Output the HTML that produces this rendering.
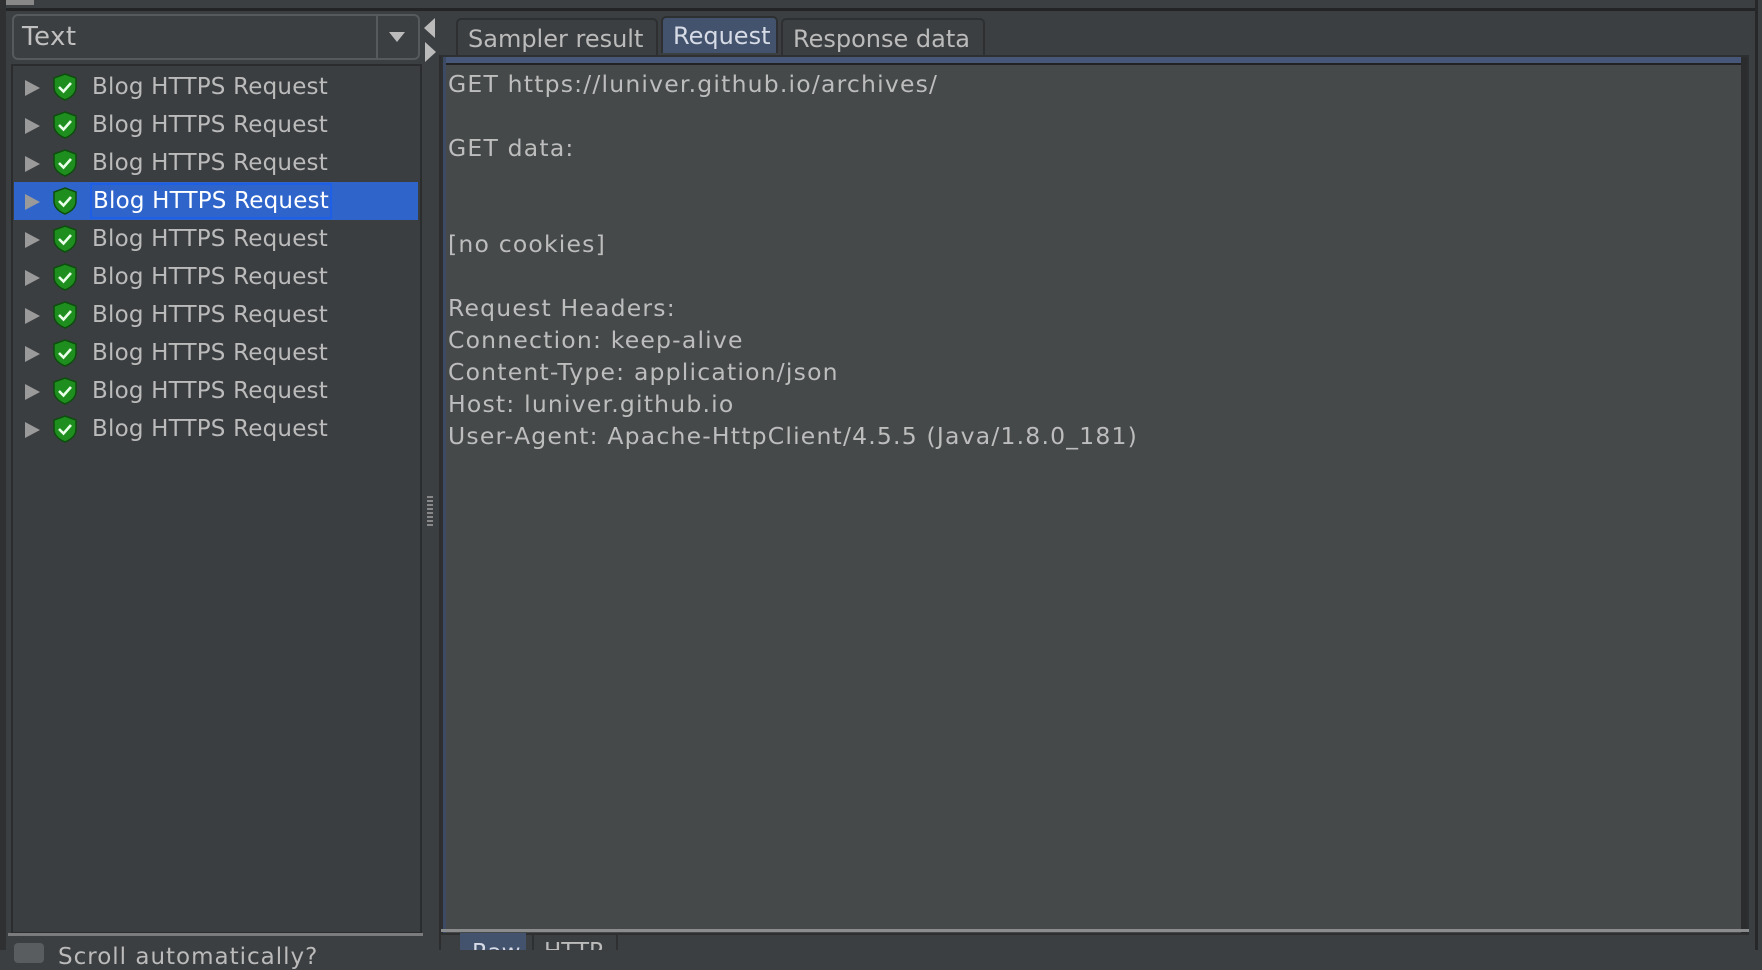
<!DOCTYPE html>
<html><head><meta charset="utf-8"><style>
*{margin:0;padding:0;box-sizing:border-box}
body{width:1762px;height:950px;background:#3c3f41;position:relative;overflow:hidden;font-family:"DejaVu Sans","Liberation Sans",sans-serif;color:#bbbbbb}
.abs{position:absolute}
.row{position:absolute;left:14px;width:404px;height:38px;font-size:23px;line-height:38px;letter-spacing:0.2px}
.row .tri{position:absolute;left:11px;top:12px;width:0;height:0;border-left:15px solid #9a9a9a;border-top:8px solid transparent;border-bottom:8px solid transparent}
.row svg{position:absolute;left:37px;top:5px}
.row .t{position:absolute;left:78px;top:0;white-space:nowrap}
.sel{background:#2f65ca;color:#fff}
.sel .t{border:2px solid #1d5fe6;line-height:32px;top:1px;padding:0 1px;left:76px}
.tab{position:absolute;top:18px;height:37px;border:2px solid #2d2f31;border-bottom:none;border-radius:5px 5px 0 0;font-size:24px;line-height:38px;padding:0 10px;background:#3c3f41;color:#bbb;white-space:nowrap}
.txt{position:absolute;left:448px;font-size:23.5px;white-space:nowrap;color:#bdbdbd;letter-spacing:1.2px}
</style></head><body>
<div class="abs" style="left:0;top:8px;width:1755px;height:3px;background:#222425"></div>
<div class="abs" style="left:0;top:0;width:34px;height:5px;background:#888"></div>
<div class="abs" style="left:1755px;top:0;width:3px;height:950px;background:#252728"></div>
<div class="abs" style="left:0;top:0;width:6px;height:950px;background:#2e3032"></div>
<div class="abs" style="left:12px;top:14px;width:408px;height:46px;border:2px solid #575a5c;border-radius:6px;background:#3c3f41"></div>
<div class="abs" style="left:376px;top:16px;width:2px;height:42px;background:#575a5c"></div>
<div class="abs" style="left:22px;top:14px;font-size:26px;line-height:46px;color:#c0c0c0;letter-spacing:0.5px">Text</div>
<div class="abs" style="left:389px;top:32px;width:0;height:0;border-top:10px solid #bbb;border-left:8px solid transparent;border-right:8px solid transparent"></div>
<div class="abs" style="left:11px;top:64px;width:411px;height:870px;background:#3b3e41;border:2px solid #2a2c2e"></div>
<div class="abs" style="left:8px;top:933px;width:415px;height:3px;background:#7a7c7e"></div>
<div class="abs" style="left:14px;top:943px;width:30px;height:20px;border-radius:4px;background:#5a5d5f"></div>
<div class="abs" style="left:58px;top:944px;font-size:23px;color:#bbb;letter-spacing:1px">Scroll automatically?</div>
<div class="abs" style="left:424px;top:18px;width:0;height:0;border-right:11px solid #bbb;border-top:10px solid transparent;border-bottom:10px solid transparent"></div>
<div class="abs" style="left:425px;top:42px;width:0;height:0;border-left:11px solid #bbb;border-top:10px solid transparent;border-bottom:10px solid transparent"></div>
<div class="abs" style="left:427px;top:496px;width:6px;height:30px;background:repeating-linear-gradient(#888 0 2px,transparent 2px 4px)"></div>
<div class="abs" style="left:439px;top:55px;width:2px;height:895px;background:#2b2d2f"></div>
<div class="tab" style="left:456px;width:202px">Sampler result</div>
<div class="tab" style="left:661px;width:117px;top:16px;background:#43536e;color:#d6dbe6;line-height:36px">Request</div>
<div class="tab" style="left:781px;width:204px">Response data</div>
<div class="abs" style="left:441px;top:55px;width:1308px;height:880px;border:2px solid #2d2f31;background:#45494a"></div>
<div class="abs" style="left:443px;top:57px;width:1304px;height:8px;background:#46577a;border-bottom:2px solid #222"></div>
<div class="abs" style="left:443px;top:57px;width:3px;height:876px;background:#3c4a63"></div>
<div class="abs" style="left:1741px;top:57px;width:6px;height:876px;background:#2a2c2e"></div>
<div class="abs" style="left:441px;top:929px;width:1308px;height:3px;background:#8a8c8e"></div>
<div class="abs" style="left:460px;top:933px;width:66px;height:17px;background:#43536e;color:#d6dbe6;font-size:23px;line-height:40px;padding-left:12px;overflow:hidden">Raw</div>
<div class="abs" style="left:532px;top:933px;width:86px;height:17px;border:2px solid #2d2f31;border-bottom:none;font-size:23px;line-height:34px;padding-left:10px;overflow:hidden">HTTP</div>
<div class="txt" style="top:70px">GET https://luniver.github.io/archives/</div>
<div class="txt" style="top:134px">GET data:</div>
<div class="txt" style="top:230px">[no cookies]</div>
<div class="txt" style="top:294px">Request Headers:</div>
<div class="txt" style="top:326px">Connection: keep-alive</div>
<div class="txt" style="top:358px">Content-Type: application/json</div>
<div class="txt" style="top:390px">Host: luniver.github.io</div>
<div class="txt" style="top:422px">User-Agent: Apache-HttpClient/4.5.5 (Java/1.8.0_181)</div>
<div class="row" style="top:68px"><div class="tri"></div><svg width="28" height="28" viewBox="0 0 28 28"><path d="M14 1 L25 5 L25 14 C25 21 19 25 14 27 C9 25 3 21 3 14 L3 5 Z" fill="#1e8f1e" stroke="#0d4d0d" stroke-width="1.5"/><path d="M8 14 L12.5 18.5 L20 10" fill="none" stroke="#e8ffe8" stroke-width="2.6"/></svg><div class="t">Blog HTTPS Request</div></div>
<div class="row" style="top:106px"><div class="tri"></div><svg width="28" height="28" viewBox="0 0 28 28"><path d="M14 1 L25 5 L25 14 C25 21 19 25 14 27 C9 25 3 21 3 14 L3 5 Z" fill="#1e8f1e" stroke="#0d4d0d" stroke-width="1.5"/><path d="M8 14 L12.5 18.5 L20 10" fill="none" stroke="#e8ffe8" stroke-width="2.6"/></svg><div class="t">Blog HTTPS Request</div></div>
<div class="row" style="top:144px"><div class="tri"></div><svg width="28" height="28" viewBox="0 0 28 28"><path d="M14 1 L25 5 L25 14 C25 21 19 25 14 27 C9 25 3 21 3 14 L3 5 Z" fill="#1e8f1e" stroke="#0d4d0d" stroke-width="1.5"/><path d="M8 14 L12.5 18.5 L20 10" fill="none" stroke="#e8ffe8" stroke-width="2.6"/></svg><div class="t">Blog HTTPS Request</div></div>
<div class="row sel" style="top:182px"><div class="tri"></div><svg width="28" height="28" viewBox="0 0 28 28"><path d="M14 1 L25 5 L25 14 C25 21 19 25 14 27 C9 25 3 21 3 14 L3 5 Z" fill="#1e8f1e" stroke="#0d4d0d" stroke-width="1.5"/><path d="M8 14 L12.5 18.5 L20 10" fill="none" stroke="#e8ffe8" stroke-width="2.6"/></svg><div class="t">Blog HTTPS Request</div></div>
<div class="row" style="top:220px"><div class="tri"></div><svg width="28" height="28" viewBox="0 0 28 28"><path d="M14 1 L25 5 L25 14 C25 21 19 25 14 27 C9 25 3 21 3 14 L3 5 Z" fill="#1e8f1e" stroke="#0d4d0d" stroke-width="1.5"/><path d="M8 14 L12.5 18.5 L20 10" fill="none" stroke="#e8ffe8" stroke-width="2.6"/></svg><div class="t">Blog HTTPS Request</div></div>
<div class="row" style="top:258px"><div class="tri"></div><svg width="28" height="28" viewBox="0 0 28 28"><path d="M14 1 L25 5 L25 14 C25 21 19 25 14 27 C9 25 3 21 3 14 L3 5 Z" fill="#1e8f1e" stroke="#0d4d0d" stroke-width="1.5"/><path d="M8 14 L12.5 18.5 L20 10" fill="none" stroke="#e8ffe8" stroke-width="2.6"/></svg><div class="t">Blog HTTPS Request</div></div>
<div class="row" style="top:296px"><div class="tri"></div><svg width="28" height="28" viewBox="0 0 28 28"><path d="M14 1 L25 5 L25 14 C25 21 19 25 14 27 C9 25 3 21 3 14 L3 5 Z" fill="#1e8f1e" stroke="#0d4d0d" stroke-width="1.5"/><path d="M8 14 L12.5 18.5 L20 10" fill="none" stroke="#e8ffe8" stroke-width="2.6"/></svg><div class="t">Blog HTTPS Request</div></div>
<div class="row" style="top:334px"><div class="tri"></div><svg width="28" height="28" viewBox="0 0 28 28"><path d="M14 1 L25 5 L25 14 C25 21 19 25 14 27 C9 25 3 21 3 14 L3 5 Z" fill="#1e8f1e" stroke="#0d4d0d" stroke-width="1.5"/><path d="M8 14 L12.5 18.5 L20 10" fill="none" stroke="#e8ffe8" stroke-width="2.6"/></svg><div class="t">Blog HTTPS Request</div></div>
<div class="row" style="top:372px"><div class="tri"></div><svg width="28" height="28" viewBox="0 0 28 28"><path d="M14 1 L25 5 L25 14 C25 21 19 25 14 27 C9 25 3 21 3 14 L3 5 Z" fill="#1e8f1e" stroke="#0d4d0d" stroke-width="1.5"/><path d="M8 14 L12.5 18.5 L20 10" fill="none" stroke="#e8ffe8" stroke-width="2.6"/></svg><div class="t">Blog HTTPS Request</div></div>
<div class="row" style="top:410px"><div class="tri"></div><svg width="28" height="28" viewBox="0 0 28 28"><path d="M14 1 L25 5 L25 14 C25 21 19 25 14 27 C9 25 3 21 3 14 L3 5 Z" fill="#1e8f1e" stroke="#0d4d0d" stroke-width="1.5"/><path d="M8 14 L12.5 18.5 L20 10" fill="none" stroke="#e8ffe8" stroke-width="2.6"/></svg><div class="t">Blog HTTPS Request</div></div>
</body></html>
